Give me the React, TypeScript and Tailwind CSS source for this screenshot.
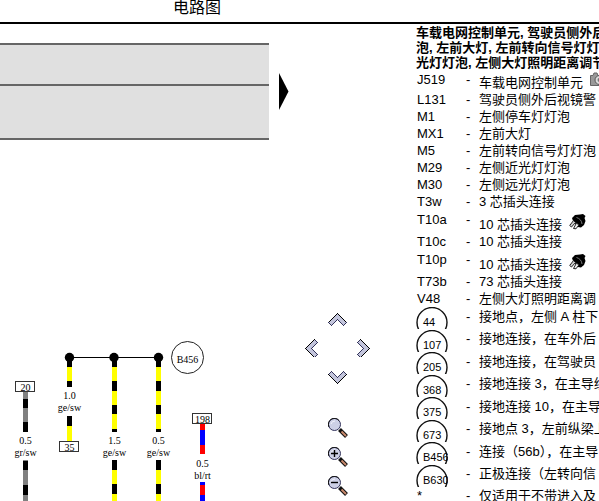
const boldLegend = [
  "车载电网控制单元, 驾驶员侧外后",
  "泡, 左前大灯, 左前转向信号灯灯",
  "光灯灯泡, 左侧大灯照明距离调节",
];

type Part = { code: string; name: string; icon?: "camera" | "plug" };

const parts: Part[] = [
  { code: "J519", name: "车载电网控制单元", icon: "camera" },
  { code: "L131", name: "驾驶员侧外后视镜警" },
  { code: "M1", name: "左侧停车灯灯泡" },
  { code: "MX1", name: "左前大灯" },
  { code: "M5", name: "左前转向信号灯灯泡" },
  { code: "M29", name: "左侧近光灯灯泡" },
  { code: "M30", name: "左侧远光灯灯泡" },
  { code: "T3w", name: "3 芯插头连接" },
  { code: "T10a", name: "10 芯插头连接", icon: "plug" },
  { code: "T10c", name: "10 芯插头连接" },
  { code: "T10p", name: "10 芯插头连接", icon: "plug" },
  { code: "T73b", name: "73 芯插头连接" },
  { code: "V48", name: "左侧大灯照明距离调" },
];

const grounds = [
  { code: "44", name: "接地点，左侧 A 柱下" },
  { code: "107", name: "接地连接，在车外后" },
  { code: "205", name: "接地连接，在驾驶员" },
  { code: "368", name: "接地连接 3，在主导线" },
  { code: "375", name: "接地连接 10，在主导" },
  { code: "673", name: "接地点 3，左前纵梁上" },
  { code: "B456", name: "连接（56b），在主导" },
  { code: "B630", name: "正极连接（左转向信" },
];

// [color, top, bottom] of every stripe on a wire
type Stripe = [string, number, number];

const Y = "#ffff00";
const K = "#000000";
const G = "#808080";
const R = "#ff0000";
const B = "#0000ff";

const longYellow: Stripe[] = [
  [K, 358, 367], [Y, 367, 381], [K, 381, 391], [Y, 391, 405], [K, 405, 414],
  [Y, 414, 429], [K, 429, 432], [K, 460, 470], [Y, 470, 484], [K, 484, 494],
  [Y, 494, 510],
];

const wires: { x: number; size: string; color: string; textY: number; stripes: Stripe[] }[] = [
  {
    x: 25,
    size: "0.5",
    color: "gr/sw",
    textY: 444,
    stripes: [
      [G, 391, 399], [K, 399, 408], [G, 408, 422], [K, 422, 432], [G, 460, 461],
      [K, 461, 470], [G, 470, 485], [K, 485, 495], [G, 495, 510],
    ],
  },
  {
    x: 69,
    size: "1.0",
    color: "ge/sw",
    textY: 399,
    stripes: [
      [K, 358, 367], [Y, 367, 381], [K, 381, 387], [K, 416, 426], [Y, 426, 441],
    ],
  },
  { x: 114, size: "1.5", color: "ge/sw", textY: 444, stripes: longYellow },
  { x: 158, size: "0.5", color: "ge/sw", textY: 444, stripes: longYellow },
  {
    x: 202,
    size: "0.5",
    color: "bl/rt",
    textY: 467,
    stripes: [
      [R, 424, 430], [B, 430, 445], [R, 445, 454], [B, 482, 485], [R, 485, 495],
      [B, 495, 510],
    ],
  },
];

const terminals = [
  { x: 25, y: 381, label: "20" },
  { x: 69, y: 441, label: "35" },
  { x: 202, y: 413, label: "198" },
];

const Wiring = () => (
  <svg
    width="416"
    height="477"
    viewBox="0 24 416 477"
    className="block font-['Liberation_Serif',serif] text-[10px]"
    textAnchor="middle"
  >
    <rect x="0" y="43" width="269" height="96" fill="#e0e0e0" />
    <path d="M0 44H269M0 85H269M0 139H269" stroke="#666" strokeWidth="2" />
    <path d="M279 73L288.5 91.5L279 110Z" />

    <path d="M69 357.5H158" stroke="#000" />
    {wires.map((w) => (
      <g key={w.x}>
        {w.stripes.map(([color, top, bottom]) => (
          <rect key={top} x={w.x - 2} y={top} width="5" height={bottom - top} fill={color} />
        ))}
        <text x={w.x + 0.5} y={w.textY}>{w.size}</text>
        <text x={w.x + 0.5} y={w.textY + 12}>{w.color}</text>
      </g>
    ))}
    {[69.5, 114, 158.5].map((x) => (
      <circle key={x} cx={x} cy="357.5" r="4.7" />
    ))}

    <circle cx="187.5" cy="357.5" r="16" fill="none" stroke="#222" />
    <text x="187.5" y="363">B456</text>

    {terminals.map((t) => (
      <g key={t.label}>
        <rect x={t.x - 9.5} y={t.y + 0.5} width="19" height="10" fill="#fff" stroke="#333" />
        <text x={t.x + 0.5} y={t.y + 9.5}>{t.label}</text>
      </g>
    ))}
  </svg>
);

const Chevron = ({ turn }: { turn: string }) => (
  <svg width="19" height="19" viewBox="0 0 19 19" className={turn} shapeRendering="crispEdges">
    <path d="M9.5 3.5L18.5 12.5L15.5 15.5L9.5 9.5L3.5 15.5L.5 12.5Z" fill="#c3c5dc" />
    <path d="M18.5 12.5L15.5 15.5L9.5 9.5L3.5 15.5L.5 12.5" fill="none" stroke="#34345c" />
    <path d="M.5 12.5L9.5 3.5L18.5 12.5" fill="none" stroke="#000" />
  </svg>
);

const Magnifier = ({ sign }: { sign?: string }) => (
  <svg width="20" height="20" viewBox="0 0 20 20">
    <path d="M11.5 11.5L18.5 18.5" stroke="#111" strokeWidth="4" />
    <path d="M13.5 13.5L18 18" stroke="#c98a6c" strokeWidth="2" />
    <circle cx="6.5" cy="6.5" r="6" fill="#cdd0e6" stroke="#34345c" />
    <path d="M1 9A6 6 0 0 1 11 2.5" fill="none" stroke="#111" />
    <path d="M3 6A4 4 0 0 1 7 3" fill="none" stroke="#f2f3fb" />
    {sign && <path d={sign} stroke="#000" strokeWidth="1.4" />}
  </svg>
);

const Controls = () => (
  <>
    <div className="absolute left-[302px] top-[286px] grid h-[77px] w-[71px] grid-cols-3 grid-rows-3 place-items-center">
      <button aria-label="上" className="col-start-2 row-start-1 self-start">
        <Chevron turn="" />
      </button>
      <button aria-label="左" className="col-start-1 row-start-2 justify-self-start">
        <Chevron turn="-rotate-90" />
      </button>
      <button aria-label="右" className="col-start-3 row-start-2 justify-self-end">
        <Chevron turn="rotate-90" />
      </button>
      <button aria-label="下" className="col-start-2 row-start-3 self-end">
        <Chevron turn="rotate-180" />
      </button>
    </div>
    <div className="absolute left-[328px] top-[394px] flex flex-col gap-[9px]">
      <button aria-label="原始大小"><Magnifier /></button>
      <button aria-label="放大"><Magnifier sign="M3 6.5H10M6.5 3V10" /></button>
      <button aria-label="缩小"><Magnifier sign="M3 6.5H10" /></button>
    </div>
  </>
);

const CameraIcon = () => (
  <svg width="18" height="15" viewBox="0 0 18 15" className="shrink-0">
    <path d="M.5 3.5H3L4 1H7L8 3.5H17.5V13.5H.5Z" fill="#999" stroke="#666" />
    <circle cx="9.5" cy="8" r="4.5" fill="#ddd" stroke="#555" />
    <circle cx="9.5" cy="8" r="2" fill="#777" />
  </svg>
);

const PlugIcon = () => (
  <svg width="17" height="16" viewBox="0 0 17 16" className="shrink-0">
    <path d="M3 4L6 1L11 .5L14 0L16.5 2L15.5 4L16.5 7L15 11L12 13.5L9 13L4 7Z" fill="#000" />
    <path d="M.7 11.5L4.5 6.5L6.5 8.5L2.5 13Z" fill="#ccc" stroke="#222" />
    <path d="M4.5 14.5L7.5 9L9.8 11L7 14.8Z" fill="#eee" stroke="#222" />
    <path d="M7.5 3.5Q12.5 5 13 10" fill="none" stroke="#777" />
  </svg>
);

const GroundBadge = ({ code }: { code: string }) => (
  <svg width="32" height="23" viewBox="0 0 32 23" className="block text-[11px]">
    <circle cx="16" cy="15.5" r="15" fill="none" stroke="#111" strokeWidth="1.4" />
    <text x="7" y="19">{code}</text>
  </svg>
);

const Legend = () => (
  <aside className="min-w-0 flex-1 overflow-hidden whitespace-nowrap pt-px text-[13px]">
    <h2 className="font-bold leading-[15px]">
      {boldLegend.map((line) => (
        <span key={line} className="block">{line}</span>
      ))}
    </h2>
    <table className="w-full table-fixed border-collapse leading-[17px]">
      <colgroup>
        <col className="w-[50px]" />
        <col className="w-[13px]" />
        <col />
      </colgroup>
      <tbody className="align-top">
        {parts.map((p) => (
          <tr key={p.code} className={p.icon === "plug" ? "h-[23px]" : p.icon ? "h-[21px]" : "h-[17px]"}>
            <td className={p.icon ? "p-0 pl-px pt-px" : "p-0 pl-px"}>{p.code}</td>
            <td className={p.icon ? "p-0 pt-px" : "p-0"}>-</td>
            <td className="p-0 align-bottom">
              <span className="flex gap-[7px]">
                {p.name}
                {p.icon && (
                  <span className="-mt-0.5 h-4">
                    {p.icon === "camera" ? <CameraIcon /> : <PlugIcon />}
                  </span>
                )}
              </span>
            </td>
          </tr>
        ))}
      </tbody>
      <tbody>
        {grounds.map((g) => (
          <tr key={g.code} className="h-[22px] even:h-[23px]">
            <td className="p-0">
              <div className="h-[22px] overflow-hidden">
                <GroundBadge code={g.code} />
              </div>
            </td>
            <td className="p-0 pt-px align-top">-</td>
            <td className="p-0 pt-px align-top">{g.name}</td>
          </tr>
        ))}
        <tr className="align-top">
          <td className="p-0 pl-px">*</td>
          <td className="p-0">-</td>
          <td className="p-0">仅适用于不带进入及</td>
        </tr>
      </tbody>
    </table>
  </aside>
);

export default function App() {
  return (
    <div className="flex h-screen flex-col overflow-hidden bg-white font-['Liberation_Sans','Noto_Sans_CJK_SC',sans-serif] text-black">
      <header className="shrink-0 border-b-2 border-black pb-[6px] pl-[173px]">
        <h1 className="text-base leading-4">电路图</h1>
      </header>
      <div className="flex min-h-0 flex-1">
        <main className="relative w-[416px] shrink-0 overflow-hidden">
          <Wiring />
          <Controls />
        </main>
        <Legend />
      </div>
    </div>
  );
}
